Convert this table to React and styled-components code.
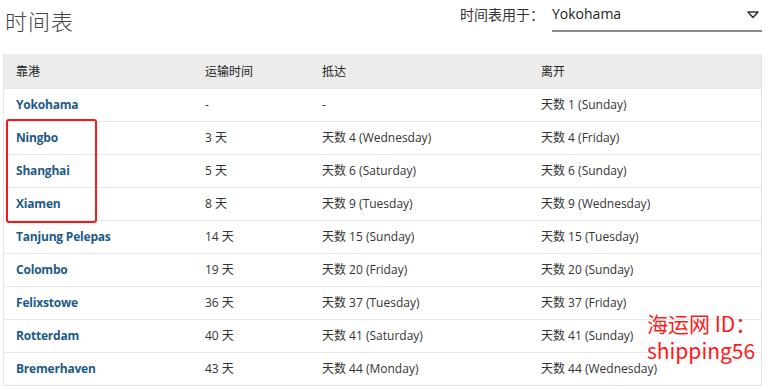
import React from "react";
import styled, { createGlobalStyle } from "styled-components";

const Global = createGlobalStyle`
  html, body { margin: 0; padding: 0; background: #fff; }
  body { font-family: "Open Sans", "Noto Sans CJK SC", sans-serif; color: #333; }
`;

const Page = styled.div`
  position: relative;
  width: 771px;
  height: 390px;
  overflow: hidden;
`;

const TopBar = styled.div`
  display: flex;
  justify-content: space-between;
  align-items: flex-start;
  height: 54px;
  padding: 0 9px 0 5px;
  box-sizing: border-box;
`;

const Title = styled.h1`
  margin: 5px 0 0;
  font-family: "Noto Sans CJK SC", sans-serif;
  font-weight: 300;
  font-size: 22px;
  line-height: 30px;
  letter-spacing: 1px;
  color: #444;
`;

const Picker = styled.div`
  display: flex;
  align-items: flex-start;
  margin-top: 3px;
`;

const PickerLabel = styled.span`
  font-family: "Noto Sans CJK SC", sans-serif;
  font-size: 14px;
  line-height: 22px;
  color: #333;
  margin-right: 8px;
`;

const Select = styled.div`
  width: 210px;
  height: 29px;
  box-sizing: border-box;
  border-bottom: 2px solid #8a8a8a;
  display: flex;
  justify-content: space-between;
  align-items: flex-start;
  font-family: "Open Sans", sans-serif;
  font-size: 14px;
  line-height: 22px;
  color: #222;
`;

const Card = styled.div`
  margin-left: 3px;
  width: 759px;
  border: 1px solid #e4e4e4;
  border-top: none;
  border-radius: 0 0 3px 3px;
  box-sizing: border-box;
`;

const Table = styled.table`
  width: 100%;
  border-collapse: collapse;
  table-layout: fixed;
  font-size: 12px;
`;

const Th = styled.th`
  box-sizing: border-box;
  background: #ececec;
  height: 34px;
  padding: 0 0 0 12px;
  text-align: left;
  font-weight: 400;
  font-family: "Noto Sans CJK SC", sans-serif;
  font-size: 12px;
  color: #222;
  width: ${(p) => (p.$w ? `${p.$w}px` : "auto")};
`;

const Td = styled.td`
  height: 31px;
  padding: 0 0 1px 12px;
  border-top: 1px solid #e8e8e8;
  font-family: "Open Sans", "Noto Sans CJK SC", sans-serif;
  font-size: 12px;
  color: #333;
  white-space: nowrap;
`;

const Port = styled.a`
  color: #1c5a86;
  font-weight: 700;
  text-decoration: none;
  letter-spacing: -0.2px;
`;

const Highlight = styled.div`
  position: absolute;
  left: 6px;
  top: 119px;
  width: 91px;
  height: 104px;
  box-sizing: border-box;
  border: 2px solid #f01c1c;
  border-radius: 3px;
  pointer-events: none;
`;

const Watermark = styled.div`
  position: absolute;
  left: 647px;
  top: 310px;
  font-family: "Noto Sans CJK SC", sans-serif;
  font-size: 21px;
  line-height: 27px;
  color: #ff1a1a;
  pointer-events: none;
`;

const rows = [
  ["Yokohama", "-", "-", "天数 1 (Sunday)"],
  ["Ningbo", "3 天", "天数 4 (Wednesday)", "天数 4 (Friday)"],
  ["Shanghai", "5 天", "天数 6 (Saturday)", "天数 6 (Sunday)"],
  ["Xiamen", "8 天", "天数 9 (Tuesday)", "天数 9 (Wednesday)"],
  ["Tanjung Pelepas", "14 天", "天数 15 (Sunday)", "天数 15 (Tuesday)"],
  ["Colombo", "19 天", "天数 20 (Friday)", "天数 20 (Sunday)"],
  ["Felixstowe", "36 天", "天数 37 (Tuesday)", "天数 37 (Friday)"],
  ["Rotterdam", "40 天", "天数 41 (Saturday)", "天数 41 (Sunday)"],
  ["Bremerhaven", "43 天", "天数 44 (Monday)", "天数 44 (Wednesday)"],
];

export default function App() {
  return (
    <Page>
      <Global />
      <TopBar>
        <Title>时间表</Title>
        <Picker>
          <PickerLabel>时间表用于：</PickerLabel>
          <Select>
            <span>Yokohama</span>
            <svg width="12" height="8" viewBox="0 0 12 8" style={{ marginTop: 8, marginRight: 3 }}>
              <path d="M1 1 H11 L6 6.5 Z" fill="none" stroke="#333" strokeWidth="1.6" strokeLinejoin="round" />
            </svg>
          </Select>
        </Picker>
      </TopBar>
      <Card>
        <Table>
          <thead>
            <tr>
              <Th $w={189}>靠港</Th>
              <Th $w={117}>运输时间</Th>
              <Th $w={219}>抵达</Th>
              <Th>离开</Th>
            </tr>
          </thead>
          <tbody>
            {rows.map((r) => (
              <tr key={r[0]}>
                <Td><Port href="#">{r[0]}</Port></Td>
                <Td>{r[1]}</Td>
                <Td>{r[2]}</Td>
                <Td>{r[3]}</Td>
              </tr>
            ))}
          </tbody>
        </Table>
      </Card>
      <Highlight />
      <Watermark>
        海运网 ID：
        <br />
        shipping56
      </Watermark>
    </Page>
  );
}
